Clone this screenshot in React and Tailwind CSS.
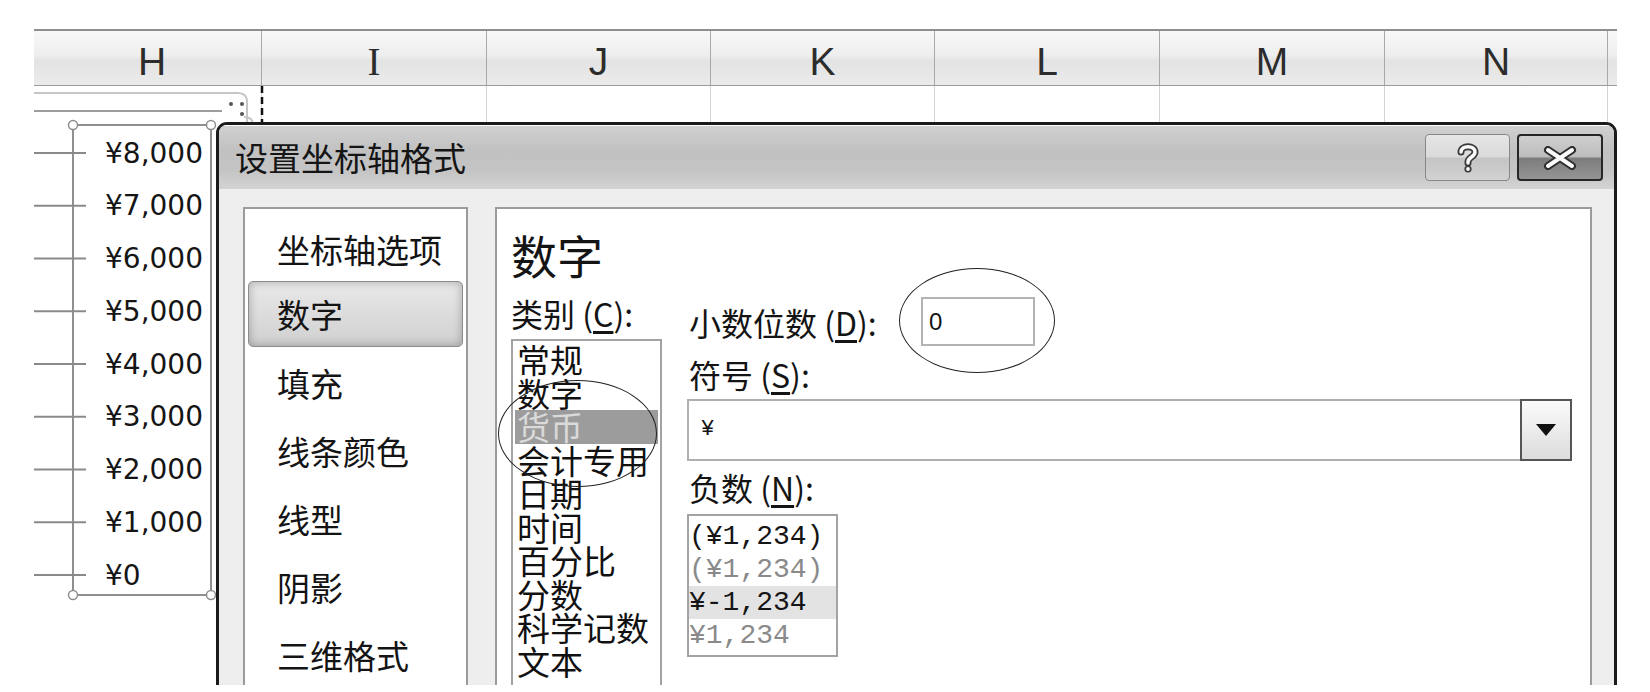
import React from "react";

const COLS = [
  { label: "H", w: "w-[228px] pl-[9px]" },
  { label: "I", w: "w-[225px]", serif: true },
  { label: "J", w: "w-[224px]" },
  { label: "K", w: "w-[224px]" },
  { label: "L", w: "w-[225px]" },
  { label: "M", w: "w-[225px]" },
  { label: "N", w: "w-[223px]" },
  { label: "", w: "w-[9px]", last: true },
];

const NAV = ["坐标轴选项", "数字", "填充", "线条颜色", "线型", "阴影", "三维格式"];

const CATEGORIES = ["常规", "数字", "货币", "会计专用", "日期", "时间", "百分比", "分数", "科学记数", "文本"];

const NEGATIVES = [
  { text: "(¥1,234)", tone: "text-[#151515]" },
  { text: "(¥1,234)", tone: "text-[#8a8a8a]" },
  { text: "¥-1,234", tone: "text-[#151515]", selected: true },
  { text: "¥1,234", tone: "text-[#8a8a8a]" },
];

const TICKS = [124, 176.75, 229.5, 282.25, 335, 387.75, 440.5, 493.25, 546];
const TICK_LABELS = ["¥8,000", "¥7,000", "¥6,000", "¥5,000", "¥4,000", "¥3,000", "¥2,000", "¥1,000", "¥0"];

export default function App() {
  return (
    <div className="relative h-[692px] w-[1650px] overflow-hidden bg-white font-['Noto_Sans_CJK_SC',sans-serif] text-[#141414]">
      <div className="pl-[34px] pt-[29px]">
        <div className="relative h-[656px] w-[1583px] overflow-hidden">
          <ColumnHeader />

          <div className="flex h-[599px]">
            {COLS.map((col, i) => (
              <div
                key={i}
                className={`${col.w} h-full ${col.last ? "" : "border-r border-[#d4d4d4]"}`}
              />
            ))}
          </div>

          <AxisChart />

          <FormatDialog />

          {/* the two hand-drawn circles */}
          <div className="absolute left-[865px] top-[239px] h-[105px] w-[156px] rounded-[50%] border border-[#222]" />
          <div className="absolute left-[464px] top-[351px] h-[107px] w-[159px] rounded-[50%] border border-[#222]" />
        </div>
      </div>
    </div>
  );
}

function ColumnHeader() {
  return (
    <div className="flex h-[57px] border-t-2 border-b border-t-[#8f8f8f] border-b-[#9a9a9a] bg-[linear-gradient(to_bottom,#f8f8f8,#eeeeee_45%,#e3e3e3_55%,#ebebeb)]">
      {COLS.map((col, i) => (
        <div
          key={i}
          className={`${col.w} flex h-full items-center justify-center pt-[6px] text-[39px] leading-none text-[#2c2c2c] ${
            col.last ? "" : "border-r border-[#a9a9a9]"
          } ${col.serif ? "font-['Liberation_Serif',serif]" : "font-['Liberation_Sans',sans-serif]"}`}
        >
          {col.label}
        </div>
      ))}
    </div>
  );
}

function AxisChart() {
  return (
    <svg className="absolute left-0 top-0" width="260" height="656" viewBox="0 0 260 656">
      <path d="M0 64 H204 Q213 64 213 73 V96" fill="none" stroke="#c6c6c6" strokeWidth="2" />
      <path d="M0 82 H188" fill="none" stroke="#9d9d9d" strokeWidth="2" />
      <path d="M210 88 Q219 88 219 96" fill="none" stroke="#c6c6c6" strokeWidth="2" />
      <circle cx="197" cy="75" r="2" fill="#555" />
      <circle cx="208" cy="75" r="2" fill="#555" />
      <circle cx="208" cy="85" r="2" fill="#555" />
      <line x1="228" y1="57" x2="228" y2="95" stroke="#111" strokeWidth="2.5" strokeDasharray="7 4" />

      <rect x="39" y="96" width="138" height="470" fill="none" stroke="#8f8f8f" strokeWidth="2" />
      {TICKS.map((y) => (
        <line key={y} x1="0" y1={y} x2="52" y2={y} stroke="#8a8a8a" strokeWidth="2" />
      ))}
      {[
        [39, 96],
        [177, 96],
        [39, 566],
        [177, 566],
      ].map(([cx, cy]) => (
        <circle key={`${cx}-${cy}`} cx={cx} cy={cy} r="4.5" fill="#fff" stroke="#8f8f8f" strokeWidth="1.5" />
      ))}
      {TICK_LABELS.map((t, i) => (
        <text
          key={t}
          x="71"
          y={TICKS[i]}
          dominantBaseline="central"
          fontFamily="DejaVu Sans, sans-serif"
          fontSize="28"
          fill="#151515"
        >
          {t}
        </text>
      ))}
    </svg>
  );
}

function FormatDialog() {
  return (
    <div className="absolute left-[182px] top-[93px] flex h-[620px] w-[1401px] flex-col overflow-hidden rounded-t-[11px] border-[3px] border-[#1b1b1b] bg-[#eeeeee]">
      {/* title bar */}
      <div className="flex h-[64px] shrink-0 items-center justify-between border-t border-white bg-[linear-gradient(to_bottom,#d0d0d0,#c1c1c1_40%,#c4c4c4_70%,#d3d3d3)] pl-[16px] pr-[11px]">
        <span className="text-[33px] leading-none text-[#151515]">设置坐标轴格式</span>
        <div className="flex gap-[7px]">
          <button className="flex h-[47px] w-[85px] items-center justify-center rounded-[4px] border-[1.5px] border-[#878787] bg-[linear-gradient(to_bottom,#e6e6e6,#dadada_48%,#c4c4c4_52%,#d2d2d2)]">
            <svg width="26" height="32" viewBox="0 0 26 32">
              <path d="M6 10 C6 3 20 3 20 10 C20 15 13 15 13 20 V21" fill="none" stroke="#3a3a3a" strokeWidth="7" strokeLinecap="round" />
              <path d="M6 10 C6 3 20 3 20 10 C20 15 13 15 13 20 V21" fill="none" stroke="#fafafa" strokeWidth="3.5" strokeLinecap="round" />
              <circle cx="13" cy="27" r="3.6" fill="#3a3a3a" />
              <circle cx="13" cy="27" r="1.9" fill="#fafafa" />
            </svg>
          </button>
          <button className="flex h-[47px] w-[86px] items-center justify-center rounded-[4px] border-2 border-[#262626] bg-[linear-gradient(to_bottom,#cfcfcf,#bdbdbd_48%,#7c7c7c_52%,#959595)]">
            <svg width="34" height="24" viewBox="0 0 34 24">
              <path d="M5 4 L29 20 M29 4 L5 20" fill="none" stroke="#2e2e2e" strokeWidth="8" strokeLinecap="round" />
              <path d="M5 4 L29 20 M29 4 L5 20" fill="none" stroke="#fbfbfb" strokeWidth="4" strokeLinecap="round" />
            </svg>
          </button>
        </div>
      </div>

      {/* body */}
      <div className="flex flex-1 gap-[27px] pl-[24px] pr-[22px] pt-[18px]">
        <div className="h-[520px] w-[225px] shrink-0 border-2 border-[#9b9b9b] bg-white pt-[6px]">
          {NAV.map((item, i) =>
            i === 1 ? (
              <div
                key={item}
                className="mx-[3px] -mt-[2px] mb-[2px] flex h-[66px] items-center rounded-[5px] border border-[#8c8c8c] bg-linear-to-b from-[#e9e9e9] to-[#d0d0d0] pl-[28px] text-[33px] leading-none shadow-[inset_0_0_10px_rgba(0,0,0,0.28)]"
              >
                {item}
              </div>
            ) : (
              <div key={item} className="flex h-[68px] items-center pl-[32px] text-[33px] leading-none">
                {item}
              </div>
            )
          )}
        </div>

        <div className="h-[520px] flex-1 border-2 border-[#9b9b9b] bg-white pl-[14px] pr-[18px] pt-[22px]">
          <h2 className="text-[46px] font-normal leading-none">数字</h2>

          <div className="mt-[20px] flex">
            <div className="w-[151px] shrink-0">
              <p className="h-[32px] text-[32px] leading-none">
                类别 (<span className="underline underline-offset-4">C</span>):
              </p>
              <div className="mt-[10px] h-[400px] border-2 border-[#a3a3a3] pt-[2px]">
                {CATEGORIES.map((c) => (
                  <div
                    key={c}
                    className={`mx-[2px] h-[33.5px] whitespace-nowrap pl-[2px] text-[33px] leading-[33.5px] ${
                      c === "货币" ? "bg-[#9c9c9c] text-[#dadada]" : "text-[#111]"
                    }`}
                  >
                    {c}
                  </div>
                ))}
              </div>
            </div>

            <div className="ml-[25px] flex-1">
              <div className="flex h-[49px] items-center">
                <p className="w-[234px] pl-[2px] text-[32px] leading-none">
                  小数位数 (<span className="underline underline-offset-4">D</span>):
                </p>
                <div className="flex h-[49px] w-[114px] items-center border-2 border-[#b3b3b3] pl-[6px] font-['Liberation_Sans',sans-serif] text-[24px] leading-none">
                  0
                </div>
              </div>

              <p className="mt-[12px] pl-[2px] text-[32px] leading-none">
                符号 (<span className="underline underline-offset-4">S</span>):
              </p>

              <div className="mt-[9px] flex h-[62px]">
                <div className="flex flex-1 items-center border-2 border-r-0 border-[#b0b0b0] pl-[12px] font-['Liberation_Mono',monospace] text-[22px] leading-none">
                  ¥
                </div>
                <div className="flex h-[62px] w-[52px] items-center justify-center border-2 border-[#555] bg-linear-to-b from-[#fbfbfb] to-[#dcdcdc]">
                  <svg width="22" height="14" viewBox="0 0 22 14">
                    <polygon points="1,1 21,1 11,13" fill="#111" />
                  </svg>
                </div>
              </div>

              <p className="mt-[10px] pl-[2px] text-[32px] leading-none">
                负数 (<span className="underline underline-offset-4">N</span>):
              </p>

              <div className="mt-[11px] h-[143px] w-[151px] border-2 border-[#a3a3a3] pt-[4px]">
                {NEGATIVES.map((n, i) => (
                  <div
                    key={i}
                    className={`h-[33px] whitespace-nowrap font-['Liberation_Mono',monospace] text-[28px] leading-[33px] ${n.tone} ${
                      n.selected ? "bg-[#e3e3e3]" : ""
                    }`}
                  >
                    {n.text}
                  </div>
                ))}
              </div>
            </div>
          </div>
        </div>
      </div>
    </div>
  );
}
